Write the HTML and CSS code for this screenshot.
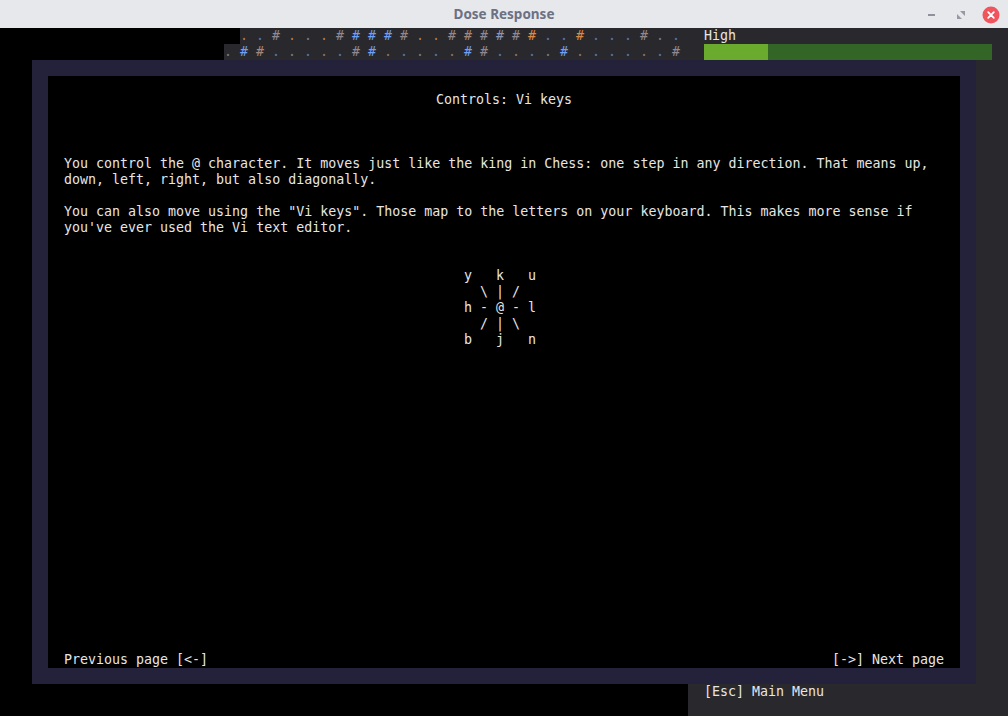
FILE: index.html
```html
<!DOCTYPE html>
<html lang="en">
<head>
<meta charset="utf-8">
<title>Dose Response</title>
<link rel="stylesheet" href="styles.css">
</head>
<body>
<div class="window">
  <header class="titlebar">
    <div class="title">Dose Response</div>
    <div class="controls">
      <span class="btn-min"></span>
      <svg class="btn-restore" width="8" height="8" viewBox="0 0 8 8"><path d="M3 0 H8 V5 Z M0 3 V8 H5 Z" fill="#9699a4"/></svg>
      <svg class="btn-close" width="18" height="18" viewBox="0 0 18 18"><circle cx="9" cy="9" r="8.5" fill="#f0545c"/><path d="M6.2 6.2 L11.8 11.8 M11.8 6.2 L6.2 11.8" stroke="#fff" stroke-width="1.8" stroke-linecap="round"/></svg>
    </div>
  </header>
  <main class="screen">
    <section class="map">
      <div class="maprow" id="row0"></div>
      <div class="maprow" id="row1"></div>
    </section>
    <aside class="sidebar">
      <div class="line">High</div>
      <div class="bar"><div class="bar-fill" style="width:64px"></div></div>
      <div class="spacer"></div>
      <div class="line">[Esc] Main Menu</div>
      <div class="line"></div>
    </aside>
    <div class="modal">
      <div class="modal-inner">
        <div class="modal-title">Controls: Vi keys</div>
        <p class="para">You control the @ character. It moves just like the king in Chess: one step in any direction. That means up,<br>down, left, right, but also diagonally.</p>
        <p class="para">You can also move using the "Vi keys". Those map to the letters on your keyboard. This makes more sense if<br>you've ever used the Vi text editor.</p>
        <pre class="diagram">y   k   u
  \ | /
h - @ - l
  / | \
b   j   n</pre>
        <div class="modal-footer">
          <span>Previous page [&lt;-]</span>
          <span>[-&gt;] Next page</span>
        </div>
      </div>
    </div>
  </main>
</div>
<script src="map.js"></script>
</body>
</html>
```
FILE: map.js
```js
(function () {
  var rows = [
    { skip: 15, cells: [
      ['.','o'],['.','b'],['#','g'],['.','o'],['.','g'],['.','o'],['#','g'],['#','b'],['#','b'],['#','b'],
      ['#','p'],['.','o'],['.','o'],['#','p'],['#','t'],['#','g'],['#','s'],['#','g'],['#','o'],['.','b'],
      ['.','b'],['#','o'],['.','b'],['.','b'],['.','b'],['#','p'],['.','g'],['.','b']
    ]},
    { skip: 14, cells: [
      ['.','g'],['#','b'],['#','t'],['.','b'],['.','g'],['.','b'],['.','t'],['.','b'],['#','g'],['#','b'],
      ['.','t'],['.','b'],['.','g'],['.','b'],['.','t'],['#','b'],['#','g'],['.','b'],['.','t'],['.','b'],
      ['.','g'],['#','b'],['.','t'],['.','b'],['.','b'],['.','b'],['.','t'],['.','b'],['#','g']
    ]}
  ];
  rows.forEach(function (r, i) {
    var el = document.getElementById('row' + i);
    for (var k = 0; k < r.skip; k++) {
      var u = document.createElement('span');
      u.className = 'cell unseen';
      el.appendChild(u);
    }
    r.cells.forEach(function (c) {
      var s = document.createElement('span');
      s.className = 'cell ' + (c[0] === '#' ? 'wall ' : 'floor ') + c[1];
      s.textContent = c[0];
      el.appendChild(s);
    });
  });
})();
```
FILE: styles.css
```css
* { box-sizing: border-box; }
html, body {
  margin: 0;
  padding: 0;
  background: #000;
}
.window {
  width: 1008px;
  height: 716px;
  display: flex;
  flex-direction: column;
  overflow: hidden;
}
.titlebar {
  height: 28px;
  flex: 0 0 28px;
  background: #e7e8eb;
  position: relative;
  display: flex;
  align-items: center;
  justify-content: center;
}
.title {
  font-family: "Noto Sans", "DejaVu Sans", sans-serif;
  font-weight: 700;
  font-size: 13.5px;
  color: #6c7183;
  letter-spacing: 0;
}
.controls {
  position: absolute;
  right: 8px;
  top: 6px;
  display: flex;
  align-items: center;
  gap: 0;
  height: 18px;
}
.btn-min {
  width: 7px;
  height: 2px;
  background: #8e919c;
  margin-right: 22px;
}
.btn-restore {
  margin-right: 17px;
}
.screen {
  position: relative;
  flex: 1;
  display: flex;
  font-family: "DejaVu Sans Mono", "Liberation Mono", monospace;
  font-size: 13.3px;
  line-height: 16px;
  color: #e6e6e6;
}
.map {
  width: 688px;
  flex: 0 0 688px;
  background: #000;
}
.maprow {
  display: grid;
  grid-template-columns: repeat(43, 16px);
  height: 16px;
}
.cell {
  height: 16px;
  background: #29282d;
  white-space: pre;
}
.cell.unseen { background: #000; }
.wall.b { color: #6e9ff2; }
.wall.g { color: #8c8991; }
.wall.p { color: #938789; }
.wall.t { color: #a5877a; }
.wall.s { color: #8c95b4; }
.wall.o { color: #d98a43; }
.floor.b { color: #4d76c6; }
.floor.g { color: #7a7a7e; }
.floor.t { color: #8f7262; }
.floor.o { color: #b47a38; }
.sidebar {
  flex: 1;
  background: #29282d;
  padding: 0 16px;
  display: flex;
  flex-direction: column;
}
.line {
  height: 16px;
  white-space: pre;
}
.bar {
  height: 16px;
  background: #336626;
  display: flex;
}
.bar-fill {
  background: #6aaa2c;
  height: 100%;
}
.spacer { flex: 1; }
.modal {
  position: absolute;
  left: 32px;
  top: 32px;
  width: 944px;
  height: 624px;
  background: #24223a;
  padding: 16px;
}
.modal-inner {
  background: #000;
  height: 100%;
  padding: 16px 16px 0 16px;
  display: flex;
  flex-direction: column;
}
.modal-title {
  text-align: center;
  height: 16px;
  margin-bottom: 48px;
}
.para {
  margin: 0 0 16px 0;
  white-space: nowrap;
}
.diagram {
  margin: 16px 0 0 400px;
  font: inherit;
  line-height: 16px;
}
.modal-footer {
  margin-top: auto;
  height: 16px;
  display: flex;
  justify-content: space-between;
}
```
